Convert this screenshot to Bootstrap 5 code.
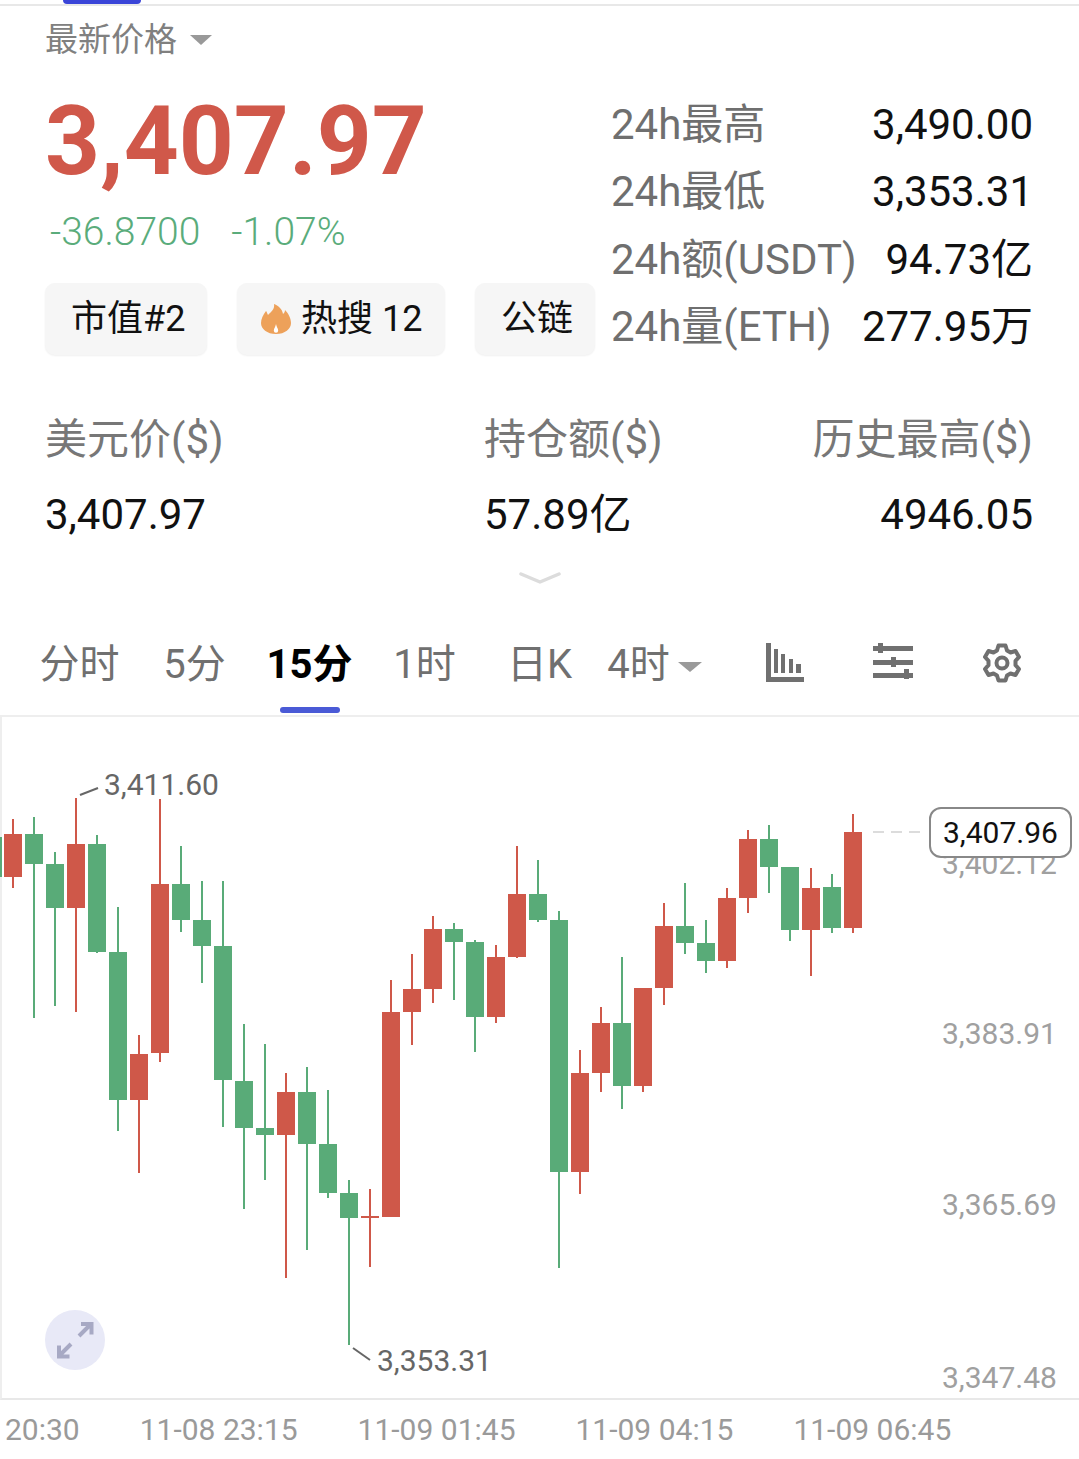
<!DOCTYPE html>
<html lang="zh">
<head>
<meta charset="utf-8">
<title>ETH</title>
<link href="https://cdn.jsdelivr.net/npm/bootstrap@5.3.0/dist/css/bootstrap.min.css" rel="stylesheet">
<style>
html,body{margin:0;background:#fff;overflow:hidden}
body{font-family:Roboto,"Noto Sans CJK SC",sans-serif;width:1079px;height:1459px;color:#111}
.top-rule{height:6px;border-bottom:2px solid #e8e8e8}
.top-tab{width:78px;height:4px;margin-left:63px;background:#3a45d8;border-radius:0 0 4px 4px}
.pad-side{padding-left:45px;padding-right:46px}
.price-kind{height:68px;font-size:33px;line-height:68px;color:#808080}
.caret-down{display:inline-block;width:0;height:0;border-style:solid;border-width:10px 11px 0;border-color:#999 transparent transparent}
.hero{padding-top:17px}
.hero-left{width:566px;flex:none}
.big-price{font-size:96px;font-weight:700;line-height:100px;color:#d0584a;letter-spacing:0}
.change-line{margin-top:16px;padding-left:5px;gap:31px;font-size:39px;line-height:50px;color:#5aac7b;font-weight:300}
.chip-line{margin-top:26px}
.chip-box{height:72px;background:#f6f6f6;border-radius:10px;font-size:36px;line-height:72px;color:#111;box-shadow:0 1px 2px #f0f0f0}
.chip-a{width:162px;padding-left:26px}
.chip-b{width:208px;margin-left:30px;padding-left:24px;gap:10px}
.chip-c{width:120px;margin-left:30px;padding-left:26px}
.fig-line{height:67.4px;line-height:67.4px;font-size:42px;color:#111}
.fig-line .fig-name{color:#6f6f6f;font-size:42px}
.facts{margin-top:49px}
.fact-name{font-size:42px;line-height:60px;color:#777}
.fact-val{font-size:42px;line-height:60px;margin-top:15px;color:#111}
.fact-a{width:439px}
.chev-wrap{margin-top:26px;height:14px;line-height:0}
.tab-row{margin-top:50px;height:82px;padding-left:22px;border-bottom:2px solid #eee}
.tab-cell{width:115px;flex:none;text-align:center;font-size:40px;line-height:60px;color:#707070;white-space:nowrap}
.tab-cell.tab-active{font-weight:700;color:#000}
.tab-bar{width:60px;height:6px;margin:12px auto 0;background:#4a5ad6;border-radius:3px}
.tab-tools{margin-left:54px;margin-top:8px;gap:69px;height:42px}
.chart-box{position:relative;height:683px;border-left:2px solid #eee;border-bottom:2px solid #e8e8e8}
.chart-svg{position:absolute;left:-2px;top:0}
.tick-lab{position:absolute;font-size:30px;line-height:36px;color:#a0a0a0;left:940px;white-space:nowrap}
.peak-lab{position:absolute;font-size:30px;line-height:36px;color:#666;white-space:nowrap}
.price-tag{position:absolute;left:927px;top:90px;width:143px;height:51px;background:#fff;border:2px solid #888;border-radius:12px;font-size:30px;line-height:47px;text-align:center;color:#111}
.expand-btn{position:absolute;left:43px;top:593px;width:60px;height:60px;padding:0;border:0;background:#e8e9f7;border-radius:50%}
.time-axis{height:60px;padding-left:5px;gap:60px;font-size:30px;line-height:60px;color:#9a9a9a;white-space:nowrap}
</style>
</head>
<body>
<div class="top-rule"><div class="top-tab"></div></div>

<div class="pad-side">
  <div class="price-kind d-flex align-items-center"><span>最新价格</span><span class="caret-down ms-2 ps-0" style="margin-left:13px!important"></span></div>

  <div class="hero d-flex">
    <div class="hero-left">
      <div class="big-price">3,407.97</div>
      <div class="change-line d-flex"><span>-36.8700</span><span>-1.07%</span></div>
      <div class="chip-line d-flex">
        <div class="chip-box chip-a">市值#2</div>
        <div class="chip-box chip-b d-flex align-items-center">
          <svg width="30" height="30" viewBox="0 0 30 30" aria-hidden="true"><path fill="#eda15a" d="M13 0C14 5 10 8 7 11C6 9 6 8 5 7C2 11 0 15 0 19C0 25 6 30 15 30C24 30 30 25 30 19C30 14 27 9 24 6C24 8 23 9 22 10C21 5 18 2 13 0Z"/><path fill="#fff" d="M15 20C14.5 23 12.8 24.500 12.800 26.600A2.200 2.200 0 0 0 17.200 26.600C17.200 24.500 15.500 23 15 20Z"/></svg>
          <span>热搜 12</span>
        </div>
        <div class="chip-box chip-c">公链</div>
      </div>
    </div>
    <div class="flex-grow-1">
      <div class="fig-line d-flex justify-content-between"><span class="fig-name">24h最高</span><span>3,490.00</span></div>
      <div class="fig-line d-flex justify-content-between"><span class="fig-name">24h最低</span><span>3,353.31</span></div>
      <div class="fig-line d-flex justify-content-between"><span class="fig-name">24h额(USDT)</span><span>94.73亿</span></div>
      <div class="fig-line d-flex justify-content-between"><span class="fig-name">24h量(ETH)</span><span>277.95万</span></div>
    </div>
  </div>

  <div class="facts d-flex">
    <div class="fact-a"><div class="fact-name">美元价($)</div><div class="fact-val">3,407.97</div></div>
    <div class="flex-grow-1"><div class="fact-name">持仓额($)</div><div class="fact-val">57.89亿</div></div>
    <div class="text-end"><div class="fact-name">历史最高($)</div><div class="fact-val">4946.05</div></div>
  </div>
</div>

<div class="chev-wrap text-center">
  <svg width="42" height="14" viewBox="0 0 42 14" aria-hidden="true"><path d="M2 3L21 11L40 3" fill="none" stroke="#dcdcdc" stroke-width="3.500" stroke-linecap="round" stroke-linejoin="round"/></svg>
</div>

<div class="tab-row d-flex">
  <div class="tab-cell">分时</div>
  <div class="tab-cell">5分</div>
  <div class="tab-cell tab-active">15分<div class="tab-bar"></div></div>
  <div class="tab-cell">1时</div>
  <div class="tab-cell">日K</div>
  <div class="tab-cell">4时<span class="caret-down ms-2 align-middle" style="border-width:10px 12px 0;border-top-color:#9a9a9a"></span></div>
  <div class="tab-tools d-flex">
    <svg width="38" height="39" viewBox="0 0 38 39" fill="#707070" aria-hidden="true"><rect x="0" y="0" width="5" height="39"/><rect x="0" y="34" width="38" height="5"/><rect x="8" y="6" width="4" height="24"/><rect x="15" y="11" width="4" height="19"/><rect x="23" y="16" width="4" height="14"/><rect x="30" y="21" width="5" height="9"/></svg>
    <svg width="40" height="39" viewBox="0 0 40 39" fill="#707070" aria-hidden="true"><rect y="3" width="40" height="5"/><rect x="5" y="0" width="5" height="10"/><rect y="17" width="40" height="5"/><rect x="18" y="14" width="5" height="10"/><rect y="30" width="40" height="5"/><rect x="31" y="26" width="5" height="10"/></svg>
    <svg width="40" height="40" viewBox="0 0 40 40" fill="none" stroke="#707070" aria-hidden="true"><path stroke-width="4" stroke-linejoin="round" d="M16.500 2.500H23.500L25 7.500L28.500 9.500L33.500 8L37 14L33.500 17.800V22.200L37 26L33.500 32L28.500 30.500L25 32.500L23.500 37.500H16.500L15 32.500L11.500 30.500L6.500 32L3 26L6.500 22.200V17.800L3 14L6.500 8L11.500 9.500L15 7.500Z"/><circle cx="20" cy="20" r="5.500" stroke-width="4"/></svg>
  </div>
</div>

<div class="chart-box">
  <svg class="chart-svg" width="1079" height="682" viewBox="0 717 1079 682" aria-hidden="true">
    <g fill="#59ab78">
      <rect x="0" y="837" width="2" height="40"/>
      <rect x="33" y="817" width="2" height="201"/><rect x="25" y="834" width="18" height="30"/>
      <rect x="54" y="852" width="2" height="154"/><rect x="46" y="864" width="18" height="44"/>
      <rect x="96" y="835" width="2" height="118"/><rect x="88" y="844" width="18" height="108"/>
      <rect x="117" y="907" width="2" height="224"/><rect x="109" y="952" width="18" height="148"/>
      <rect x="180" y="846" width="2" height="86"/><rect x="172" y="884" width="18" height="36"/>
      <rect x="201" y="881" width="2" height="102"/><rect x="193" y="920" width="18" height="26"/>
      <rect x="222" y="881" width="2" height="246"/><rect x="214" y="946" width="18" height="134"/>
      <rect x="243" y="1024" width="2" height="185"/><rect x="235" y="1081" width="18" height="47"/>
      <rect x="264" y="1044" width="2" height="136"/><rect x="256" y="1128" width="18" height="7"/>
      <rect x="306" y="1067" width="2" height="183"/><rect x="298" y="1092" width="18" height="52"/>
      <rect x="327" y="1090" width="2" height="108"/><rect x="319" y="1144" width="18" height="49"/>
      <rect x="348" y="1180" width="2" height="165"/><rect x="340" y="1193" width="18" height="25"/>
      <rect x="453" y="923" width="2" height="77"/><rect x="445" y="929" width="18" height="13"/>
      <rect x="474" y="940" width="2" height="112"/><rect x="466" y="942" width="18" height="75"/>
      <rect x="537" y="860" width="2" height="62"/><rect x="529" y="894" width="18" height="26"/>
      <rect x="558" y="911" width="2" height="357"/><rect x="550" y="920" width="18" height="252"/>
      <rect x="621" y="957" width="2" height="152"/><rect x="613" y="1023" width="18" height="63"/>
      <rect x="684" y="883" width="2" height="71"/><rect x="676" y="926" width="18" height="17"/>
      <rect x="705" y="920" width="2" height="53"/><rect x="697" y="943" width="18" height="18"/>
      <rect x="768" y="825" width="2" height="68"/><rect x="760" y="839" width="18" height="28"/>
      <rect x="789" y="867" width="2" height="74"/><rect x="781" y="867" width="18" height="63"/>
      <rect x="831" y="874" width="2" height="59"/><rect x="823" y="887" width="18" height="41"/>
    </g>
    <g fill="#cf5849">
      <rect x="12" y="819" width="2" height="69"/><rect x="4" y="834" width="18" height="43"/>
      <rect x="75" y="798" width="2" height="214"/><rect x="67" y="844" width="18" height="64"/>
      <rect x="138" y="1035" width="2" height="138"/><rect x="130" y="1054" width="18" height="46"/>
      <rect x="159" y="799" width="2" height="263"/><rect x="151" y="884" width="18" height="169"/>
      <rect x="285" y="1073" width="2" height="205"/><rect x="277" y="1092" width="18" height="43"/>
      <rect x="369" y="1189" width="2" height="78"/><rect x="361" y="1216" width="18" height="2"/>
      <rect x="390" y="980" width="2" height="100"/><rect x="382" y="1012" width="18" height="205"/>
      <rect x="411" y="954" width="2" height="91"/><rect x="403" y="989" width="18" height="23"/>
      <rect x="432" y="916" width="2" height="87"/><rect x="424" y="929" width="18" height="60"/>
      <rect x="495" y="945" width="2" height="78"/><rect x="487" y="957" width="18" height="60"/>
      <rect x="516" y="846" width="2" height="112"/><rect x="508" y="894" width="18" height="63"/>
      <rect x="579" y="1050" width="2" height="144"/><rect x="571" y="1073" width="18" height="99"/>
      <rect x="600" y="1007" width="2" height="85"/><rect x="592" y="1023" width="18" height="50"/>
      <rect x="642" y="1000" width="2" height="92"/><rect x="634" y="988" width="18" height="98"/>
      <rect x="663" y="903" width="2" height="102"/><rect x="655" y="926" width="18" height="62"/>
      <rect x="726" y="888" width="2" height="80"/><rect x="718" y="898" width="18" height="63"/>
      <rect x="747" y="830" width="2" height="83"/><rect x="739" y="839" width="18" height="59"/>
      <rect x="810" y="868" width="2" height="108"/><rect x="802" y="888" width="18" height="42"/>
      <rect x="852" y="814" width="2" height="119"/><rect x="844" y="832" width="18" height="96"/>
    </g>
    <path d="M80 795L98 788" stroke="#666" stroke-width="2" fill="none"/>
    <path d="M353 1348L370 1360" stroke="#666" stroke-width="2" fill="none"/>
    <path d="M873 832H926" stroke="#dcdcdc" stroke-width="2" stroke-dasharray="11 7" fill="none"/>
  </svg>
  <div class="peak-lab" style="left:102px;top:50px">3,411.60</div>
  <div class="peak-lab" style="left:375px;top:626px">3,353.31</div>
  <div class="tick-lab" style="top:129px">3,402.12</div>
  <div class="tick-lab" style="top:299px">3,383.91</div>
  <div class="tick-lab" style="top:470px">3,365.69</div>
  <div class="tick-lab" style="top:643px">3,347.48</div>
  <div class="price-tag">3,407.96</div>
  <button class="expand-btn btn" type="button" aria-label="expand">
    <svg width="60" height="60" viewBox="0 0 60 60" fill="none" stroke="#a7a9c4" stroke-width="4" aria-hidden="true"><path d="M34 26L46 14M36 14H46.500V24.500M26 34L14 46M14 35.500V46.500H24.500"/></svg>
  </button>
</div>

<div class="time-axis d-flex">
  <span>20:30</span><span>11-08 23:15</span><span>11-09 01:45</span><span>11-09 04:15</span><span>11-09 06:45</span>
</div>

<script src="https://cdn.jsdelivr.net/npm/bootstrap@5.3.0/dist/js/bootstrap.bundle.min.js"></script>
</body>
</html>
